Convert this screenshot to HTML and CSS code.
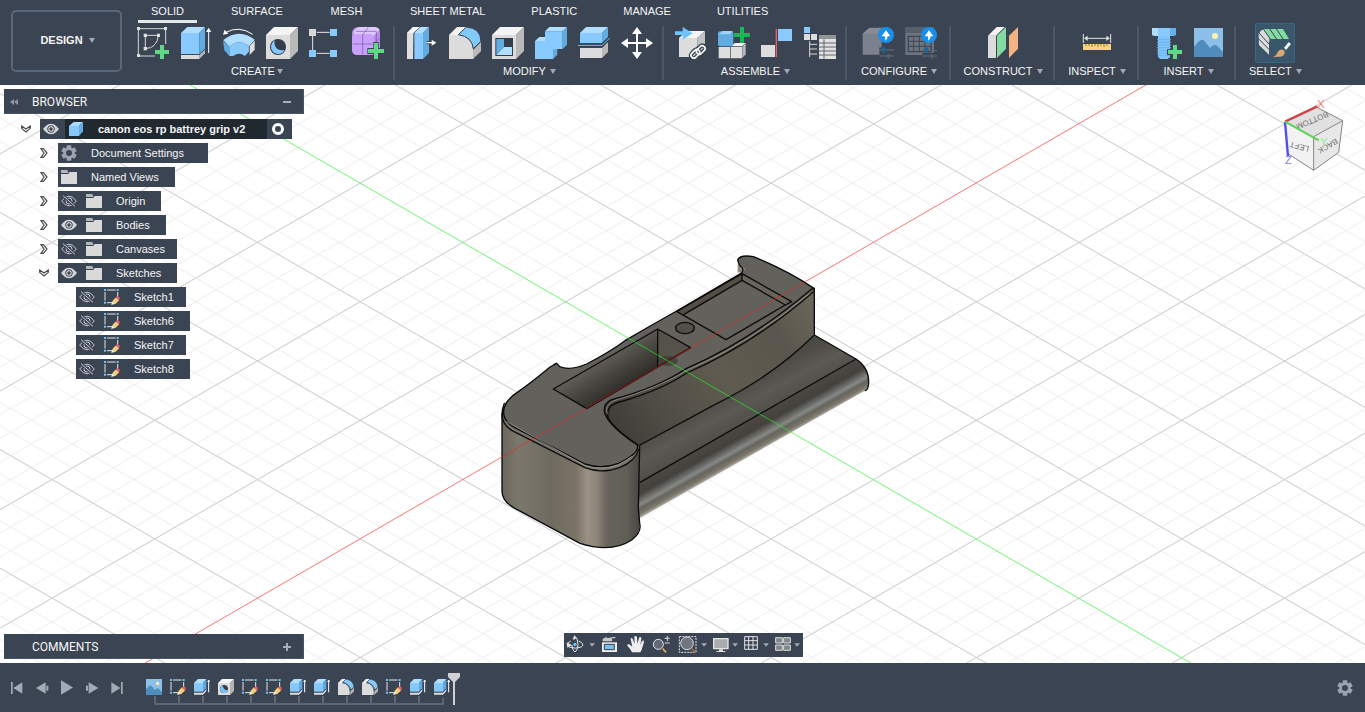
FILE: index.html
```html
<!DOCTYPE html>
<html lang="en">
<head>
<meta charset="utf-8">
<title>canon eos rp battrey grip v2</title>
<link rel="stylesheet" href="styles.css">
</head>
<body>
<svg class="defs" aria-hidden="true">
  <symbol id="arrow" viewBox="0 0 6 5"><path d="M0 0H6L3 5Z" fill="#a3a8b2"/></symbol>
  <symbol id="eye" viewBox="0 0 48 34"><path d="M0 17Q24-15 48 17Q24 49 0 17Z" fill="#d4d4d6"/><circle cx="24" cy="17" r="10" fill="#dcdcdc" stroke="#3b4453" stroke-width="3"/><circle cx="24" cy="17" r="5" fill="#3b4453"/></symbol>
  <symbol id="eye-off" viewBox="0 0 48 34"><path d="M2 17Q24-12 46 17Q24 46 2 17Z" fill="none" stroke="#c9ccd0" stroke-width="3"/><circle cx="24" cy="17" r="9" fill="none" stroke="#c9ccd0" stroke-width="3"/><path d="M6 1L42 33" stroke="#3b4453" stroke-width="8"/><path d="M6 1L42 33" stroke="#c9ccd0" stroke-width="3"/></symbol>
  <symbol id="folder" viewBox="0 0 48 42"><path d="M0 0H18L22 6V9H0Z" fill="#b5b5b7"/><path d="M0 12H22L26 6H48V42H0Z" fill="#d9d9d9"/></symbol>
  <symbol id="chev" viewBox="0 0 24 30"><path d="M3 2H10L21 15L10 28H3L12 15Z" fill="#fff" stroke="#474a50" stroke-width="3.5"/></symbol>
  <symbol id="cube" viewBox="0 0 42 42"><path d="M0 12L14 0H42L30 12Z" fill="#aedcff"/><path d="M0 12H30V42H0Z" fill="#86c8fa"/><path d="M30 12L42 0V28L30 42Z" fill="#62ace2"/></symbol>
  <symbol id="gear" viewBox="0 0 48 48"><g fill="#9da4af"><rect x="17" y="1" width="14" height="46" rx="2"/><rect x="17" y="1" width="14" height="46" rx="2" transform="rotate(60 24 24)"/><rect x="17" y="1" width="14" height="46" rx="2" transform="rotate(120 24 24)"/><circle cx="24" cy="24" r="17"/></g><circle cx="24" cy="24" r="9" fill="#3b4453"/></symbol>
  <symbol id="sketch" viewBox="0 0 48 48"><path d="M9 3H35M3 9V35M41 9V24M9 41H24" fill="none" stroke="#e3e5e8" stroke-width="3"/><path d="M0 0H6V6H0ZM38 0H44V6H38ZM0 38H6V44H0Z" fill="#6fc3fb"/><path d="M22 47L26 35L36 25L46 34L34 45Z" fill="#f3cf7e"/><path d="M22 47L25 38L31 44Z" fill="#eee"/><path d="M36 26L41 22L48 27L44 35Z" fill="#ef5e62"/></symbol>
  <symbol id="extrude" viewBox="0 0 48 48"><path d="M0 12L12 0H37L27 12Z" fill="#b4deff"/><path d="M0 12H27V38H0Z" fill="#86c8fa"/><path d="M27 12L37 0V28L27 38Z" fill="#5ca8e2"/><path d="M0 41H27L37 31V37L27 47H0Z" fill="#dedede"/><path d="M44 6V40M41 9L44 3L47 9" stroke="#fff" stroke-width="3" fill="none"/></symbol>
  <symbol id="hole" viewBox="0 0 48 48"><path d="M0 12L12 0H48L36 12Z" fill="#f4f4f4"/><path d="M0 12H36V48H0Z" fill="#dcdcdc"/><path d="M36 12L48 0V36L36 48Z" fill="#b4b4b4"/><circle cx="18" cy="30" r="12" fill="#343d4a"/><path d="M14 19A12 12 0 1 0 30 33Q16 36 14 19Z" fill="#7cc4fa"/></symbol>
  <symbol id="fillet" viewBox="0 0 48 48"><path d="M0 12L12 0H24L12 12Z" fill="#f4f4f4"/><path d="M0 48V12H12Q34 14 35 37V48Z" fill="#dcdcdc"/><path d="M14 10L24 0Q46 4 48 24L38 33Q34 15 14 10Z" fill="#86c8fa" stroke="#39424f" stroke-width="2"/><path d="M37 37L48 26V37L37 48Z" fill="#b4b4b4"/></symbol>
  <symbol id="image" viewBox="0 0 87 87"><path d="M0 0H87V87H0Z" fill="#8cc0e8"/><path d="M0 56L15 40Q24 30 34 42L48 60L56 53Q64 47 72 56L87 72V87H0Z" fill="#4e8dbd"/><circle cx="63" cy="24" r="9" fill="#fdf2b4"/></symbol>
</svg>

<div class="app">
<header class="toolbar">
  <button class="design">DESIGN <svg class="arrow"><use href="#arrow"/></svg></button>
  <div class="ribbon">
    <nav class="tabs">
      <button class="tab active">SOLID</button><button class="tab">SURFACE</button><button class="tab">MESH</button><button class="tab">SHEET METAL</button><button class="tab">PLASTIC</button><button class="tab">MANAGE</button><button class="tab">UTILITIES</button>
    </nav>
    <div class="groups">
      <section class="group first">
        <div class="icons">
          <button class="tool" aria-label="Create Sketch"><svg viewBox="411 81 96 96"><path d="M415 86H497V168H415Z" fill="none" stroke="#d7d7d7" stroke-width="3"/><path d="M436 106H475Q472 144 436 146Z" fill="none" stroke="#d7d7d7" stroke-width="3"/><path d="M411 81h9v9h-9zM492 81h9v9h-9zM411 162h9v9h-9zM431 101h10v10h-10zM471 101h9v10h-9zM431 141h10v10h-10z" fill="#dedede"/><path d="M465 132H507V177H465Z" fill="#3b4453"/><path d="M480 135h12v15h15v12h-15v15h-12v-15h-15v-12h15z" fill="#60d987"/></svg></button>
          <button class="tool" aria-label="Extrude"><svg viewBox="540 81 96 96"><path d="M543 99L562 81H615L598 99Z" fill="#b2deff"/><path d="M543 99H598V162H543Z" fill="#88cafd"/><path d="M598 99L615 81V146L598 162Z" fill="#60abe0"/><path d="M543 165H598V177H543Z" fill="#dcdcdc"/><path d="M598 165L615 149V160L598 177Z" fill="#b8b8b8"/><path d="M626 92V159" stroke="#fff" stroke-width="3"/><path d="M618 96L626 83L634 96Z" fill="#fff"/></svg></button>
          <button class="tool" aria-label="Revolve"><svg viewBox="669 81 96 96"><path d="M670 120Q718 82 765 120L748 140Q717 114 688 140Z" fill="#b2deff"/><path d="M669 121L688 140V168L673 151Z" fill="#60abe0"/><path d="M688 140Q717 114 748 140V154L735 168Q717 154 700 168H688Z" fill="#88cafd"/><path d="M748 138L765 120V149L748 167Z" fill="#e1e1e1" stroke="#343d4a" stroke-width="2"/><path d="M676 98Q717 75 758 103" fill="none" stroke="#fff" stroke-width="3"/><path d="M669 104L674 89L685 101Z" fill="#fff"/></svg></button>
          <button class="tool" aria-label="Hole"><svg viewBox="798 81 96 96"><path d="M798 105L822 81H894L870 105Z" fill="#f4f4f4"/><path d="M798 105H870V177H798Z" fill="#dcdcdc"/><path d="M870 105L894 81V153L870 177Z" fill="#b9b9b9"/><circle cx="834" cy="141" r="24" fill="#343d4a"/><path d="M824 121A22 22 0 1 0 854 151Q820 153 824 121Z" fill="#84c9fe"/></svg></button>
          <button class="tool" aria-label="Rectangular Pattern"><svg viewBox="927 81 96 96"><path d="M938 108V150M950 97H989M950 160H989" stroke="#e7e7e7" stroke-width="3"/><path d="M927 87h21v21h-21z" fill="#d8d8d8"/><path d="M990 87h21v21h-21zM927 150h21v21h-21zM990 150h21v21h-21z" fill="#86cbff"/></svg></button>
          <button class="tool" aria-label="Create Form"><svg viewBox="1056 81 96 96"><rect x="1056" y="81" width="84" height="84" rx="18" fill="#b98ce8"/><path d="M1060 96Q1068 82 1080 81H1122Q1136 82 1139 90L1120 108H1066Z" fill="#e0c8ff"/><rect x="1056" y="102" width="66" height="63" rx="14" fill="#c9a0fb"/><path d="M1058 132H1120L1139 114M1088 164V104L1105 82M1068 94H1129V148" fill="none" stroke="#765a9d" stroke-width="2"/><path d="M1120 126h16v18h16v18h-16v15h-16v-15h-18v-18h18z" fill="#3b4453"/><path d="M1122 129h12v18h18v12h-18v18h-12v-18h-18v-12h18z" fill="#60d987"/></svg></button>
        </div>
        <button class="label">CREATE<svg class="arrow"><use href="#arrow"/></svg></button>
      </section>
      <section class="group">
        <div class="icons">
          <button class="tool" aria-label="Press Pull"><svg viewBox="48 81 96 96"><path d="M51 99L69 81H90L71 99V177H51Z" fill="#dedede"/><path d="M51 99L69 81H88L69 99Z" fill="#f5f5f5"/><path d="M71 99L91 81V177H69Z" fill="#343d4a"/><path d="M73 99L91 81H117L99 99Z" fill="#b2deff"/><path d="M73 99H99V177H73Z" fill="#88cafd"/><path d="M99 99L117 81V159L99 177Z" fill="#60abe0"/><path d="M110 128H129" stroke="#343d4a" stroke-width="10"/><path d="M110 128H129" stroke="#fff" stroke-width="4"/><path d="M125 119L139 128L125 137Z" fill="#fff"/></svg></button>
          <button class="tool" aria-label="Fillet"><svg viewBox="177 81 96 96"><path d="M177 105L201 81H231L207 105Z" fill="#f4f4f4"/><path d="M177 105H207Q249 110 249 150V177H177Z" fill="#dcdcdc"/><path d="M205 104L229 81Q272 84 273 124L250 146Q246 110 205 104Z" fill="#80cbfb" stroke="#343d4a" stroke-width="3"/><path d="M249 150L273 126V154L249 177Z" fill="#b9b9b9"/></svg></button>
          <button class="tool" aria-label="Shell"><svg viewBox="306 81 96 96"><path d="M306 105L330 81H402L378 105Z" fill="#f4f4f4"/><path d="M306 105H378V177H306Z" fill="#dcdcdc"/><path d="M378 105L402 81V153L378 177Z" fill="#b9b9b9"/><path d="M316 114H369V168H316Z" fill="#343d4a"/><path d="M319 117H342V141L319 165Z" fill="#60abe0"/><path d="M342 141H366V165H319Z" fill="#b2deff"/></svg></button>
          <button class="tool" aria-label="Combine"><svg viewBox="435 81 96 96"><path d="M435 123H465V94H518V147H502L489 160V177H435Z" fill="#88cafd"/><path d="M465 94L478 81H531L518 94Z" fill="#b2deff"/><path d="M435 123L448 111H465V123Z" fill="#b2deff"/><path d="M518 94L531 81V134L518 147ZM489 148H502V164L489 177Z" fill="#60abe0"/></svg></button>
          <button class="tool" aria-label="Split Body"><svg viewBox="564 81 96 96"><path d="M570 99L588 81H654L636 99Z" fill="#b2deff"/><path d="M570 99H636V129H570Z" fill="#88cafd"/><path d="M636 99L654 81V111L636 129Z" fill="#60abe0"/><path d="M570 144H636V174H570Z" fill="#dcdcdc"/><path d="M636 144L654 126V156L636 174Z" fill="#b9b9b9"/><path d="M564 136H637L660 113" fill="none" stroke="#343d4a" stroke-width="8"/><path d="M564 136H637L660 113" fill="none" stroke="#6fc4ff" stroke-width="3"/></svg></button>
          <button class="tool" aria-label="Move"><svg viewBox="693 81 96 96"><path d="M741 92V166M704 129H778" stroke="#fff" stroke-width="6"/><path d="M726 102L741 81L756 102ZM726 156L741 177L756 156ZM714 115L693 129L714 144ZM768 115L789 129L768 144Z" fill="#fff"/></svg></button>
        </div>
        <button class="label">MODIFY<svg class="arrow"><use href="#arrow"/></svg></button>
      </section>
      <section class="group">
        <div class="icons">
          <button class="tool" aria-label="Insert Derive"><svg viewBox="45 81 96 96"><path d="M57 114L80 93H135L112 114Z" fill="#f4f4f4"/><path d="M57 114H112V171H57Z" fill="#dcdcdc"/><path d="M112 114L135 93V148L112 171Z" fill="#c2c2c2"/><path d="M45 94H68V81L98 100L68 119V105H45Z" fill="#6fc3ff"/><g fill="none" stroke="#3b4453" stroke-width="13"><rect x="91" y="153" width="29" height="17" rx="8" transform="rotate(-50 106 162)"/><rect x="109" y="140" width="29" height="17" rx="8" transform="rotate(-38 124 149)"/></g><g fill="none" stroke="#fff" stroke-width="5"><rect x="92" y="153" width="29" height="17" rx="8" transform="rotate(-45 106 162)"/><rect x="108" y="141" width="29" height="17" rx="8" transform="rotate(-45 123 150)"/></g></svg></button>
          <button class="tool" aria-label="New Component"><svg viewBox="174 81 96 96"><path d="M176 141H211V175H176ZM213 141H246V175H213Z" fill="#dedede"/><path d="M213 139L225 129H257L246 139Z" fill="#f4f4f4"/><path d="M247 140L257 130V163L247 174Z" fill="#b9b9b9"/><rect x="174" y="94" width="46" height="45" rx="6" fill="#60abe0"/><path d="M176 103L188 93H218L210 103Z" fill="#9bd3ff"/><path d="M240 81h12v18h18v12h-18v18h-12v-18h-18v-12h18z" fill="#18b852"/></svg></button>
          <button class="tool" aria-label="Joint"><svg viewBox="303 81 96 96"><path d="M303 135H345V171H303Z" fill="#dcdcdc"/><path d="M354 87H396V123H354Z" fill="#88cafd"/><path d="M349 87V171" stroke="#ef6060" stroke-width="4"/></svg></button>
          <button class="tool" aria-label="Bill of Materials"><svg viewBox="432 81 96 96"><path d="M432 81h18v18h-18z" fill="#88cafd"/><path d="M432 102h18v18h-18zM453 102h18v18h-18z" fill="#dcdcdc"/><path d="M449 123V171M449 133H471M449 147H471M449 162H471" stroke="#d8d8d8" stroke-width="3"/><path d="M477 105H528V177H477Z" fill="#e1e1e1"/><path d="M477 105H528V117H477Z" fill="#949494"/><path d="M477 129H528M477 141H528M477 153H528M477 165H528M492 118V177" stroke="#606670" stroke-width="3"/></svg></button>
        </div>
        <button class="label">ASSEMBLE<svg class="arrow"><use href="#arrow"/></svg></button>
      </section>
      <section class="group mid">
        <div class="icons">
          <button class="tool" aria-label="Configure Model"><svg viewBox="603 81 96 96"><path d="M605 101L625 83H680L662 101V164H605Z" fill="#7c828d"/><path d="M605 101L625 84H670L655 101Z" fill="#868c96"/><path d="M655 142H699V177H655Z" fill="#3b4453"/><path d="M655 150H699M655 168H699" stroke="#59616e" stroke-width="4"/><path d="M668 142V158" stroke="#126aa5" stroke-width="8"/><path d="M682 162V176" stroke="#59616e" stroke-width="6"/><circle cx="675" cy="105" r="24" fill="#188fe9"/><path d="M662 109L675 91L688 109H680Q680 118 672 122Q674 114 671 109Z" fill="#fff"/></svg></button>
          <button class="tool" aria-label="Configuration Table"><svg viewBox="732 81 96 96"><path d="M733 82H819V165H733Z" fill="#6d7480"/><path d="M733 82H819V99H733Z" fill="#565e6a"/><path d="M742 109H810V155H742Z" fill="none" stroke="#3d4654" stroke-width="4"/><path d="M742 124H810M742 139H810M758 109V155M775 109V155M792 109V155" stroke="#3d4654" stroke-width="3"/><path d="M784 158H828V177H784Z" fill="#3b4453"/><path d="M784 151H828M784 168H828" stroke="#59616e" stroke-width="4"/><path d="M798 142V158" stroke="#126aa5" stroke-width="8"/><path d="M812 162V176" stroke="#59616e" stroke-width="6"/><circle cx="804" cy="105" r="24" fill="#188fe9"/><path d="M791 109L804 91L817 109H809Q809 118 801 122Q803 114 800 109Z" fill="#fff"/></svg></button>
        </div>
        <button class="label">CONFIGURE<svg class="arrow"><use href="#arrow"/></svg></button>
      </section>
      <section class="group mid">
        <div class="icons">
          <button class="tool" aria-label="Offset Plane"><svg viewBox="111 81 96 96"><path d="M114 107L140 81H164L138 107Z" fill="#f4f4f4"/><path d="M114 107H138V174H114Z" fill="#dcdcdc"/><path d="M141 107L168 81V146L141 174Z" fill="#83dba2"/><path d="M177 107L204 81V146L177 174Z" fill="#f5b384"/></svg></button>
        </div>
        <button class="label">CONSTRUCT<svg class="arrow"><use href="#arrow"/></svg></button>
      </section>
      <section class="group small">
        <div class="icons">
          <button class="tool" aria-label="Measure"><svg viewBox="393 81 96 96"><path d="M400 102V129M482 102V129M406 115H476" stroke="#e1e1e1" stroke-width="3"/><path d="M402 115L413 107V123ZM480 115L469 107V123Z" fill="#e1e1e1"/><path d="M399 132H483V150H399Z" fill="#fbd281"/><path d="M408 132V138M417 132V138M426 132V141M435 132V138M444 132V141M453 132V138M462 132V141M471 132V138" stroke="#8a784e" stroke-width="3"/></svg></button>
        </div>
        <button class="label">INSPECT<svg class="arrow"><use href="#arrow"/></svg></button>
      </section>
      <section class="group insert">
        <div class="icons">
          <button class="tool" aria-label="Insert Fastener"><svg viewBox="603 81 96 96"><path d="M606 84H678V105L668 108H616L606 105Z" fill="#88cafd"/><path d="M606 84H624V108H614L606 105Z" fill="#b2deff"/><path d="M660 84H678V105L668 108H660Z" fill="#66b1e9"/><path d="M624 108H660V171L653 177H631L624 171Z" fill="#80c6fb"/><path d="M621 119H663M621 127H663M621 135H663M621 143H663M621 151H663M621 159H663M623 167H661" stroke="#6cb3e8" stroke-width="3"/><path d="M651 148H696V165H687V177H660V165H651Z" fill="#3b4453"/><path d="M669 135h12v15h15v12h-15v15h-12v-15h-15v-12h15z" fill="#60d987"/></svg></button>
          <button class="tool" aria-label="Canvas"><svg viewBox="732 81 96 96"><use href="#image" x="732" y="84" width="87" height="87"/></svg></button>
        </div>
        <button class="label">INSERT<svg class="arrow"><use href="#arrow"/></svg></button>
      </section>
      <section class="group last">
        <div class="icons">
          <button class="tool selected" aria-label="Select"><svg viewBox="915 69 120 120"><path d="M926 112Q927 90 943 87L958 103L958 126L927 103Z" fill="#dcdcdc"/><path d="M939 87H999L1017 117H960Z" fill="#83dba2"/><path d="M926 98L957 124V164L927 135Z" fill="#dcdcdc"/><path d="M940 87L961 117M958 85L980 118M978 85L1000 118M926 98L958 133M925 116L958 149" stroke="#354252" stroke-width="3"/><path d="M1002 143L1016 126L1023 132L1008 150Z" fill="#f4f4f4"/><path d="M970 171Q980 166 984 155Q992 144 1003 152Q1008 166 991 170Z" fill="#d9a86b"/></svg></button>
        </div>
        <button class="label">SELECT<svg class="arrow"><use href="#arrow"/></svg></button>
      </section>
    </div>
  </div>
</header>

<main class="viewport">
  <svg class="scene" viewBox="0 85 1365 578" preserveAspectRatio="xMidYMid slice" role="img" aria-label="3D model of a battery grip">
    <defs>
      <pattern id="minor" patternUnits="userSpaceOnUse" x="668" y="361" width="41.08" height="23.72"><path d="M-41.08 -23.72L82.16 47.44M-41.08 47.44L82.16 -23.72" stroke="#ededed" fill="none"/></pattern>
      <linearGradient id="front" gradientUnits="userSpaceOnUse" x1="36" y1="0" x2="450" y2="0"><stop offset="0" stop-color="#6a675c"/><stop offset=".12" stop-color="#7b776c"/><stop offset=".35" stop-color="#6f6b60"/><stop offset=".54" stop-color="#7b7467"/><stop offset=".62" stop-color="#9b9184"/><stop offset=".69" stop-color="#8a8377"/><stop offset=".76" stop-color="#68645b"/><stop offset=".9" stop-color="#605e57"/><stop offset="1" stop-color="#484641"/></linearGradient>
      <linearGradient id="wall" gradientUnits="userSpaceOnUse" x1="380" y1="560" x2="975" y2="180"><stop offset="0" stop-color="#3f3d38"/><stop offset=".2" stop-color="#4f4c45"/><stop offset=".5" stop-color="#5f5b50"/><stop offset=".8" stop-color="#5a564d"/><stop offset="1" stop-color="#6b665b"/></linearGradient>
      <linearGradient id="shelf" gradientUnits="userSpaceOnUse" x1="690" y1="450" x2="760" y2="580"><stop offset="0" stop-color="#4c4a45"/><stop offset=".4" stop-color="#5a5954"/><stop offset="1" stop-color="#4b4843"/></linearGradient>
      <linearGradient id="tube" gradientUnits="userSpaceOnUse" x1="800" y1="513" x2="845" y2="593"><stop offset="0" stop-color="#4b4843"/><stop offset=".35" stop-color="#44413d"/><stop offset=".54" stop-color="#6b6c68"/><stop offset=".65" stop-color="#858984"/><stop offset=".77" stop-color="#66645e"/><stop offset=".92" stop-color="#7a766b"/><stop offset="1" stop-color="#a09c93"/></linearGradient>
      <linearGradient id="pit" gradientUnits="userSpaceOnUse" x1="330" y1="330" x2="400" y2="440"><stop offset="0" stop-color="#66645e"/><stop offset=".5" stop-color="#47453f"/><stop offset="1" stop-color="#2b2a27"/></linearGradient>
    </defs>
    <rect y="85" width="1365" height="578" fill="#fff"/>
    <rect y="85" width="1365" height="578" fill="url(#minor)"/>
    <path d="M-1664 -274l2200 1270m-1994.6 -1270l2200 1270m-1994.6 -1270l2200 1270m-1994.6 -1270l2200 1270m-1994.6 -1270l2200 1270m-1994.6 -1270l2200 1270m-1789.2 -1270l2200 1270m-1994.6 -1270l2200 1270m-1994.6 -1270l2200 1270m-1994.6 -1270l2200 1270m-1994.6 -1270l2200 1270m-1994.6 -1270l2200 1270" stroke="#cfcfcf" fill="none"/>
    <path d="M-1664 996l2200 -1270m-1994.6 1270l2200 -1270m-1994.6 1270l2200 -1270m-1994.6 1270l2200 -1270m-1994.6 1270l2200 -1270m-1994.6 1270l2200 -1270m-1789.2 1270l2200 -1270m-1994.6 1270l2200 -1270m-1994.6 1270l2200 -1270m-1994.6 1270l2200 -1270m-1994.6 1270l2200 -1270m-1994.6 1270l2200 -1270" stroke="#cfcfcf" fill="none"/>
    <g transform="translate(490 245) scale(.33333)" stroke-linejoin="round" stroke-linecap="round">
      <path d="M1098 342Q1137 368 1136 412L1132 433L440 824V712Z" fill="url(#tube)"/>
      <path d="M975 270L1098 342L440 718V580Q560 520 680 460Q850 370 975 250Z" fill="url(#shelf)"/>
      <path d="M972 130V272Q850 392 680 480L446 604L330 520Q320 480 362 455Q480 420 590 350Q790 260 965 125Z" fill="url(#wall)"/>
      <path d="M36 505V748Q45 775 75 790L270 895Q365 925 425 885Q452 862 449 835L445 790L449 600Z" fill="url(#front)"/>
      <path d="M200 355L209 365Q240 378 290 357Q360 320 405 287Q485 240 560 198L752 86Q767 74 750 62L743 45Q750 28 790 35Q890 75 972 130L965 142Q780 295 590 376Q500 430 365 464Q336 478 345 507Q360 545 442 600Q449 625 390 655Q345 678 285 660L75 555Q25 530 40 487Q50 462 85 440Q125 412 180 366Z" fill="#63615c"/>
      <path d="M40 495Q28 525 70 548L280 654Q330 674 385 653Q430 635 445 603L448 620Q425 655 385 668Q330 682 280 666L65 558Q35 540 36 515Z" fill="#77756e"/>
      <path d="M743 40Q750 63 766 72L756 84L743 82Z" fill="#8f897d"/>
      <path d="M190 432L503 252L602 308L290 491Z" fill="url(#pit)"/>
      <path d="M503 252L602 308L503 362Z" fill="#55524a"/>
      <ellipse cx="533" cy="348" rx="30" ry="15" fill="#36342f" opacity=".6"/>
      <path d="M560 199L756 86L905 170L708 284Z" fill="#63615c"/>
      <path d="M560 199L756 86V106L582 208Z" fill="#534f47"/>
      <path d="M756 86L905 170L886 180L756 106Z" fill="#69645a"/>
      <ellipse cx="585" cy="249" rx="28" ry="17" fill="#514f49" stroke="#0b0b0b" stroke-width="4"/>
      <g fill="none" stroke="#0b0b0b" stroke-width="4">
        <path d="M200 355L209 365Q240 378 290 357Q360 320 405 287Q485 240 560 198L752 86Q767 74 750 62L743 45Q750 28 790 35Q890 75 972 130"/>
        <path d="M200 355L180 366Q125 412 85 440Q50 462 43 487M200 355L192 358"/>
        <path d="M43 487Q32 525 75 548L285 657Q335 674 385 655Q449 625 442 600Q360 545 345 507Q336 478 365 464Q500 430 590 370Q780 288 965 132L972 130"/>
        <path d="M43 475Q22 530 65 556L285 668Q335 688 390 667Q435 650 447 612M446 602Q370 550 355 520Q348 500 362 483Q374 474 400 468Q520 432 590 384Q790 298 973 138"/>
        <path d="M973 132V270Q850 392 680 476L450 600M973 270L1098 342L450 712M1098 342Q1137 368 1136 412Q1135 435 1126 437"/>
        <path d="M36 505V738Q36 770 75 790L270 895Q365 925 425 885Q456 862 449 835L445 790L449 605"/>
        <path d="M190 432L503 252L602 308L290 491ZM503 252V362M560 199L756 86L905 170L886 180L708 284ZM756 86V106L582 208M756 106L886 180"/>
      </g>
      <path d="M50 530L285 662Q335 678 385 660L425 635M352 505Q342 482 372 467Q500 430 590 377Q785 292 960 145" fill="none" stroke="#aaa69c" stroke-width="2"/>
    </g>
    <path d="M-310 926L1627 -193" stroke="#ff1c1c" stroke-opacity=".55"/>
    <path d="M-310 -204L1646 926" stroke="#22ff22" stroke-opacity=".6"/>
  </svg>

  <svg class="viewcube" viewBox="0 0 330 300" aria-label="View cube">
    <path d="M90 96L184 51L263 92L176 140Z" fill="#e0e0e0"/><path d="M90 96L176 140V241L99 191Z" fill="#f2f2f2"/><path d="M176 140L263 92L251 187L176 241Z" fill="#e8e8e8"/>
    <path d="M184 51L263 92L251 187L176 241L99 191M176 140L263 92M176 140V241" fill="none" stroke="#858585" stroke-width="3"/>
    <g class="face"><text transform="translate(169 84) rotate(157)">BOTTOM</text><text transform="translate(135 162) rotate(195)">LEFT</text><text transform="translate(214 161) rotate(150)">BACK</text></g>
    <path d="M90 95L187 49" stroke="#cf4444" stroke-width="7"/><path d="M90 96L99 199" stroke="#4d4df0" stroke-width="7"/><path d="M90 95L191 151" stroke="#5bd35b" stroke-width="6"/>
    <g class="axis"><text x="198" y="53" fill="#f47b7b">X</text><text x="207" y="169" fill="#8cef8c">Y</text><text x="100" y="222" fill="#8080fa">Z</text></g>
  </svg>

  <aside class="browser">
    <header class="panel"><svg class="collapse" viewBox="0 0 8 6"><path d="M4 0V6L0 3ZM8 0V6L4 3Z"/></svg><h2>BROWSER</h2><button class="mark" aria-label="Minimize"><svg viewBox="0 0 8 8"><path d="M0 3H8V5H0Z"/></svg></button></header>
    <ul class="tree">
      <li><button class="twist open" aria-label="Collapse"><svg><use href="#chev"/></svg></button><div class="node root"><svg class="eye"><use href="#eye"/></svg><div class="name"><svg class="cube"><use href="#cube"/></svg><b>canon eos rp battrey grip v2</b></div><input type="radio" checked aria-label="Activate component"></div></li>
      <li class="l1"><button class="twist" aria-label="Expand"><svg><use href="#chev"/></svg></button><div class="node r24"><svg class="gear"><use href="#gear"/></svg><span>Document Settings</span></div></li>
      <li class="l1"><button class="twist" aria-label="Expand"><svg><use href="#chev"/></svg></button><div class="node"><svg class="folder"><use href="#folder"/></svg><span>Named Views</span></div></li>
      <li class="l1"><button class="twist" aria-label="Expand"><svg><use href="#chev"/></svg></button><div class="node"><svg class="eye"><use href="#eye-off"/></svg><svg class="folder"><use href="#folder"/></svg><span>Origin</span></div></li>
      <li class="l1"><button class="twist" aria-label="Expand"><svg><use href="#chev"/></svg></button><div class="node"><svg class="eye"><use href="#eye"/></svg><svg class="folder"><use href="#folder"/></svg><span>Bodies</span></div></li>
      <li class="l1"><button class="twist" aria-label="Expand"><svg><use href="#chev"/></svg></button><div class="node r12"><svg class="eye"><use href="#eye-off"/></svg><svg class="folder"><use href="#folder"/></svg><span>Canvases</span></div></li>
      <li class="l1"><button class="twist open" aria-label="Collapse"><svg><use href="#chev"/></svg></button><div class="node"><svg class="eye"><use href="#eye"/></svg><svg class="folder"><use href="#folder"/></svg><span>Sketches</span></div></li>
      <li class="l2"><div class="node r12"><svg class="eye"><use href="#eye-off"/></svg><svg class="folder"><use href="#sketch"/></svg><span>Sketch1</span></div></li>
      <li class="l2"><div class="node"><svg class="eye"><use href="#eye-off"/></svg><svg class="folder"><use href="#sketch"/></svg><span>Sketch6</span></div></li>
      <li class="l2"><div class="node r12"><svg class="eye"><use href="#eye-off"/></svg><svg class="folder"><use href="#sketch"/></svg><span>Sketch7</span></div></li>
      <li class="l2"><div class="node"><svg class="eye"><use href="#eye-off"/></svg><svg class="folder"><use href="#sketch"/></svg><span>Sketch8</span></div></li>
    </ul>
  </aside>

  <section class="comments panel"><h2>COMMENTS</h2><button class="mark" aria-label="Expand comments"><svg viewBox="0 0 8 8"><path d="M3 0H5V3H8V5H5V8H3V5H0V3H3Z"/></svg></button></section>

  <nav class="navbar" aria-label="Navigation">
    <svg viewBox="0 0 717 72">
      <g fill="none" stroke="#e4e4e4" stroke-width="3"><path d="M27 18Q33 6 39 18Q45 34 39 50Q33 62 27 50Q24 42 24 36"/><path d="M20 24Q2 34 16 42Q34 49 52 42Q64 32 44 24"/></g><path d="M8 28L24 36L10 44ZM28 22L38 14L30 6Z" fill="#e4e4e4"/><circle cx="33" cy="34" r="5" fill="#70c2f7"/>
      <path d="M76 31H93L84 41ZM412 31H429L420 41ZM505 31H522L513 41ZM598 31H615L606 41ZM691 31H708L699 41Z" fill="#a3a8b2"/>
      <path d="M114 28H159V57H114Z" fill="#eee"/><path d="M121 34H151V50H121Z" fill="#78bff1" stroke="#35404e" stroke-width="3"/><path d="M116 25V18L128 11V16L154 11V16H144V25Z" fill="#c9cbcd"/>
      <path d="M204 58Q200 48 190 38Q189 33 196 34L205 41L200 18Q201 12 206 17L212 33L211 11Q215 7 219 12L220 32L226 13Q232 10 232 17L229 36L234 24Q240 20 240 27L233 50L229 58Z" fill="#eee"/>
      <circle cx="283" cy="34" r="15" fill="#606875" stroke="#e8e8e8" stroke-width="3"/><path d="M302 16H317M310 9V24M302 30H317" stroke="#ddd" stroke-width="3"/><path d="M296 47L306 58" stroke="#eaaa55" stroke-width="5"/>
      <path d="M346 11H396V58H346Z" fill="none" stroke="#e4e4e4" stroke-width="3" stroke-dasharray="6 3"/><circle cx="369" cy="31" r="19" fill="#707681" stroke="#d8d8d8" stroke-width="3"/><path d="M383 47L394 58" stroke="#937044" stroke-width="5"/>
      <path d="M449 17H492V47H449Z" fill="#a9abad" stroke="#e4e4e4" stroke-width="4"/><path d="M465 49H477V54H484V57H457V54H465Z" fill="#ddd"/>
      <path d="M542 11H580V49H542ZM554 11V49M567 11V49M542 23H580M542 36H580" fill="none" stroke="#e4e4e4" stroke-width="3"/>
      <g fill="#7f858d" stroke="#dedede" stroke-width="3"><path d="M635 14H655V30H635ZM659 14H679V30H659ZM635 36H655V52H635ZM659 36H679V52H659Z"/></g>
    </svg>
  </nav>
</main>

<footer class="timeline">
  <div class="playback">
    <button aria-label="Go to start"><svg viewBox="0 0 36 36"><path d="M0 0H5V36H0ZM34 1V35L7 18Z"/></svg></button>
    <button aria-label="Step back"><svg viewBox="0 0 36 36"><path d="M29 1V35L0 18ZM31 11H37V26H31Z"/></svg></button>
    <button aria-label="Play" class="play"><svg viewBox="0 0 36 44"><path d="M0 0V44L36 22Z"/></svg></button>
    <button aria-label="Step forward"><svg viewBox="0 0 36 36"><path d="M8 1V35L37 18ZM0 11H6V26H0Z"/></svg></button>
    <button aria-label="Go to end"><svg viewBox="0 0 36 36"><path d="M30 0H35V36H30ZM1 1V35L28 18Z"/></svg></button>
  </div>
  <ol class="features">
    <li><svg><use href="#image"/></svg></li><li><svg><use href="#sketch"/></svg></li><li><svg><use href="#extrude"/></svg></li><li><svg><use href="#hole"/></svg></li><li><svg><use href="#sketch"/></svg></li><li><svg><use href="#sketch"/></svg></li><li><svg><use href="#extrude"/></svg></li><li><svg><use href="#extrude"/></svg></li><li><svg><use href="#fillet"/></svg></li><li><svg><use href="#fillet"/></svg></li><li><svg><use href="#sketch"/></svg></li><li><svg><use href="#extrude"/></svg></li><li><svg><use href="#extrude"/></svg></li>
  </ol>
  <svg class="playhead" viewBox="0 0 12 32"><path d="M0 0H12V4L7 9V32H5V9L0 4Z" fill="#cfd1d5"/></svg>
  <button class="settings" aria-label="Timeline settings"><svg><use href="#gear"/></svg></button>
</footer>
</div>
</body>
</html>
```
FILE: styles.css
```css
* { box-sizing: border-box; }
html, body { height: 100%; margin: 0; }
body { font: 11px/16px "Liberation Sans", Arial, sans-serif; color: #f5f5f5; overflow: hidden; }
button { margin: 0; padding: 0; border: 0; background: none; color: inherit; font: inherit; cursor: pointer; }
svg { display: block; }
ul, ol, h2 { margin: 0; padding: 0; list-style: none; }
.defs { position: absolute; width: 0; height: 0; }
.app { display: flex; flex-direction: column; height: 100vh; }

.toolbar { display: flex; gap: 8px; height: 85px; padding-left: 11px; background: #3b4453; }
.design { display: flex; align-items: center; justify-content: center; gap: 6px; width: 111px; height: 62px; margin-top: 10px; padding: 0 0 2px 2px; border: 2px solid #58687a; border-radius: 5px; font-weight: bold; }
.arrow { width: 6px; height: 5px; }
.ribbon { flex: 1; }
.tabs { display: flex; gap: 22px; height: 23px; padding-left: 8px; }
.tab { min-width: 59px; padding: 2px 12px 1px; height: 23px; border-bottom: 3px solid transparent; white-space: nowrap; }
.tab.active { border-color: #e6e7ea; }
.groups { display: flex; }
.group { display: flex; flex-direction: column; align-items: center; height: 54px; margin-top: 3px; padding: 1px 9px 0 11px; border-right: 2px solid #4b5767; }
.group.first { padding-left: 7px; }
.group.first .label { align-self: flex-start; margin-left: 94px; gap: 2px; }
.group.mid { width: 104px; }
.group.small { width: 84px; }
.group.insert { width: 97px; padding-left: 13px; }
.group.last { padding: 1px 0 0 13px; border: 0; }
.icons { display: flex; gap: 11px; height: 32px; }
.tool { width: 32px; height: 32px; }
.tool svg { width: 32px; height: 32px; }
.tool.selected { width: 40px; height: 40px; margin-top: -4px; border-radius: 2px; background: #3a566b; box-shadow: inset 0 0 0 1px #356885; }
.tool.selected svg { width: 40px; height: 40px; }
.label { display: flex; align-items: center; gap: 4px; margin-top: 4px; white-space: nowrap; }

.viewport { position: relative; flex: 1; min-height: 0; overflow: hidden; background: #fff; }
.scene { width: 100%; height: 100%; }
.viewcube { position: absolute; top: 5px; right: 0; width: 110px; height: 100px; }
.face { font-size: 24px; fill: #737373; text-anchor: middle; }
.axis { font-size: 33px; text-anchor: middle; }

.browser { position: absolute; top: 4px; left: 4px; width: 300px; }
.panel { display: flex; align-items: center; height: 25px; padding: 1px 12px 0 28px; background: #3b4453; border: 1px solid #4a5566; border-width: 0 1px 1px 0; }
.panel h2 { flex: 1; padding-top: 1px; font: 12px/16px Roboto, sans-serif; }
.collapse { width: 8px; height: 6px; margin: 0 14px 0 -22px; fill: #8e96a5; }
.mark svg { width: 8px; height: 8px; fill: #a9aeb8; }
.comments { position: absolute; left: 4px; bottom: 4px; width: 300px; }
.tree { display: flex; flex-direction: column; gap: 4px; margin-top: 5px; padding-left: 14px; }
.tree li { display: flex; align-items: center; height: 20px; }
.l1 { padding-left: 18px; }
.l2 { padding-left: 58px; }
.twist { width: 22px; padding-left: 4px; }
.twist svg { width: 8px; height: 10px; }
.twist.open svg { transform: rotate(90deg); }
.node { display: flex; align-items: center; height: 20px; padding: 0 16px 0 3px; background: #3b4453; white-space: nowrap; }
.node.r12 { padding-right: 12px; }
.node.r24 { padding-right: 24px; }
.node.root { padding-right: 8px; }
.eye { width: 16px; height: 12px; }
.gear, .folder { width: 16px; height: 16px; }
.node span { margin-left: 14px; }
.eye + .folder { margin-left: 9px; }
.name { display: flex; align-items: center; gap: 15px; width: 202px; height: 20px; margin: 0 5px 0 6px; padding-left: 4px; background: #202830; }
.cube { width: 14px; height: 14px; }
.root input { appearance: none; width: 12px; height: 12px; margin: 0; border: 3px solid #fff; border-radius: 50%; }

.navbar { position: absolute; left: 564px; bottom: 6px; width: 239px; background: #3b4453; }

.timeline { display: flex; height: 49px; padding: 0 12px 0 11px; background: #3b4453; }
.playback { display: flex; gap: 13px; height: 49px; align-items: center; }
.playback svg { width: 12px; height: 12px; fill: #a5aab4; overflow: visible; }
.playback .play svg { height: 15px; }
.features { display: flex; margin: 16px 0 0 18px; }
.features li { position: relative; width: 24px; height: 26px; padding-left: 5px; }
.features li svg { width: 16px; height: 16px; }
.features li::after { content: ""; position: absolute; left: 13px; bottom: 0; width: 24px; height: 7px; border: solid #596779; border-width: 0 0 2px 2px; }
.features li:last-child::after { width: 2px; border-bottom: 0; }
.playhead { width: 12px; height: 32px; margin: 10px auto 0 -5px; }
.settings svg { width: 16px; height: 16px; }
```
